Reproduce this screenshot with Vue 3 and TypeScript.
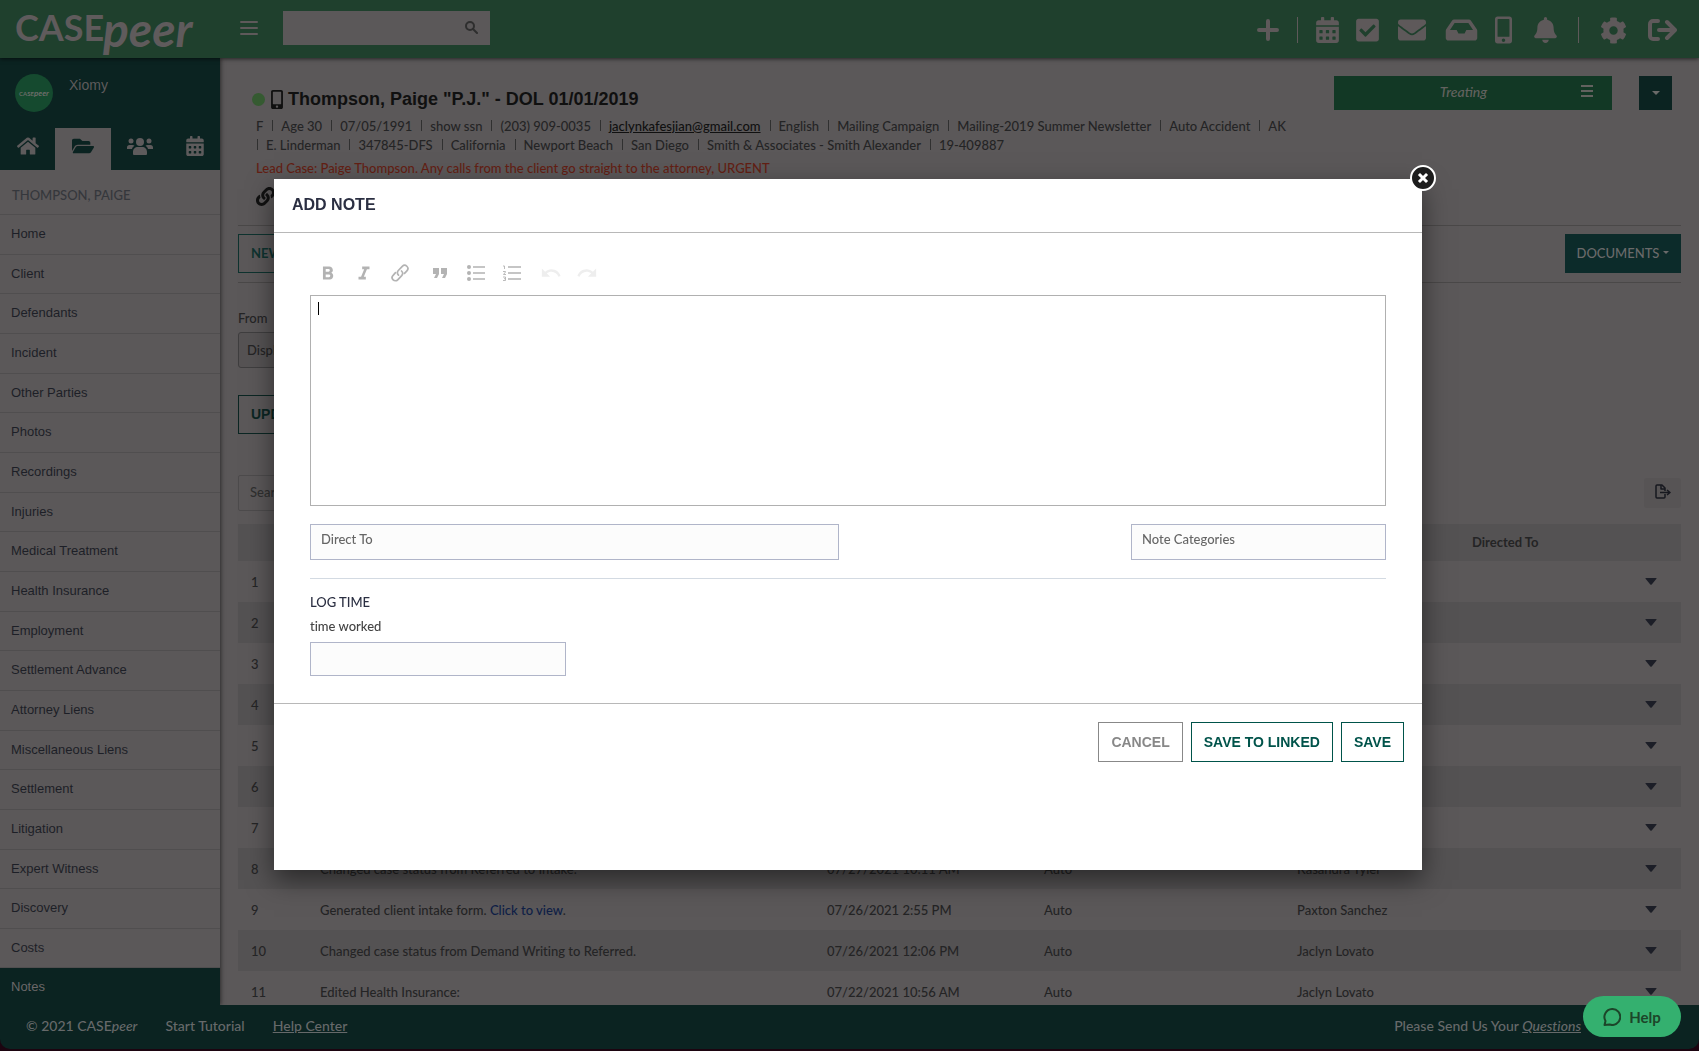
<script setup lang="ts">
import { ref } from 'vue'

interface Icon {
  box: string
  d: string
}

interface NavIcon extends Icon {
  label: string
  w: number
  h: number
  gap: number
}

interface NoteRow {
  id: number
  text?: string
  link?: string
  date?: string
  category?: string
  author?: string
}

const calendar: Icon = {
  box: '0 0 448 512',
  d: 'M0 464c0 26.500 21.500 48 48 48h352c26.500 0 48-21.500 48-48V192H0v272zm320-196c0-6.600 5.400-12 12-12h40c6.600 0 12 5.400 12 12v40c0 6.600-5.400 12-12 12h-40c-6.600 0-12-5.400-12-12v-40zm0 128c0-6.600 5.400-12 12-12h40c6.600 0 12 5.400 12 12v40c0 6.600-5.400 12-12 12h-40c-6.600 0-12-5.400-12-12v-40zM192 268c0-6.600 5.400-12 12-12h40c6.600 0 12 5.400 12 12v40c0 6.600-5.400 12-12 12h-40c-6.600 0-12-5.400-12-12v-40zm0 128c0-6.600 5.400-12 12-12h40c6.600 0 12 5.400 12 12v40c0 6.600-5.400 12-12 12h-40c-6.600 0-12-5.400-12-12v-40zM64 268c0-6.600 5.400-12 12-12h40c6.600 0 12 5.400 12 12v40c0 6.600-5.400 12-12 12H76c-6.600 0-12-5.400-12-12v-40zm0 128c0-6.600 5.400-12 12-12h40c6.600 0 12 5.400 12 12v40c0 6.600-5.400 12-12 12H76c-6.600 0-12-5.400-12-12v-40zM400 64h-48V16c0-8.800-7.200-16-16-16h-32c-8.800 0-16 7.200-16 16v48H160V16c0-8.800-7.200-16-16-16h-32c-8.800 0-16 7.200-16 16v48H48C21.500 64 0 85.500 0 112v48h448v-48c0-26.500-21.500-48-48-48z',
}

const mobile: Icon = {
  box: '0 0 320 512',
  d: 'M272 0H48C21.500 0 0 21.500 0 48v416c0 26.500 21.500 48 48 48h224c26.500 0 48-21.500 48-48V48c0-26.500-21.500-48-48-48zM160 480c-17.700 0-32-14.300-32-32s14.300-32 32-32 32 14.300 32 32-14.300 32-32 32zm112-108c0 6.600-5.400 12-12 12H60c-6.600 0-12-5.400-12-12V60c0-6.600 5.400-12 12-12h200c6.600 0 12 5.400 12 12v312z',
}

const headerIcons: NavIcon[] = [
  { label: 'Calendar', w: 23, h: 26, gap: 18, ...calendar },
  {
    label: 'Tasks', w: 23, h: 26, gap: 17, box: '0 0 448 512',
    d: 'M400 480H48c-26.510 0-48-21.490-48-48V80c0-26.510 21.490-48 48-48h352c26.510 0 48 21.490 48 48v352c0 26.510-21.490 48-48 48zm-204.686-98.059l184-184c6.248-6.248 6.248-16.379 0-22.627l-22.627-22.627c-6.248-6.248-16.379-6.249-22.628 0L184 302.745l-70.059-70.059c-6.248-6.248-16.379-6.248-22.628 0l-22.627 22.627c-6.248 6.248-6.248 16.379 0 22.627l104 104c6.249 6.250 16.379 6.250 22.628.001z',
  },
  {
    label: 'Messages', w: 28, h: 28, gap: 19, box: '0 0 512 512',
    d: 'M502.300 190.800c3.900-3.100 9.700-.2 9.700 4.700V400c0 26.500-21.500 48-48 48H48c-26.500 0-48-21.500-48-48V195.600c0-5 5.700-7.800 9.700-4.700 22.400 17.400 52.100 39.500 154.100 113.600 21.100 15.400 56.700 47.800 92.200 47.600 35.700.3 72-32.800 92.300-47.600 102-74.100 131.600-96.300 154-113.700zM256 320c23.200.4 56.600-29.200 73.400-41.400 132.700-96.300 142.800-104.700 173.400-128.700 5.800-4.500 9.200-11.500 9.200-18.900v-19c0-26.500-21.500-48-48-48H48c-26.500 0-48 21.500-48 48v19c0 7.400 3.400 14.300 9.200 18.900 30.600 23.900 40.700 32.400 173.400 128.700 16.800 12.200 50.200 41.800 73.400 41.400z',
  },
  {
    label: 'Inbox', w: 33, h: 28, gap: 19, box: '0 0 576 512',
    d: 'M567.938 243.908L462.250 85.374A48.003 48.003 0 0 0 422.311 64H153.689a48 48 0 0 0-39.938 21.374L8.062 243.908A47.994 47.994 0 0 0 0 270.533V400c0 26.510 21.490 48 48 48h480c26.510 0 48-21.490 48-48V270.533a47.994 47.994 0 0 0-8.062-26.625zM162.252 128h251.497l85.333 128H376l-32 64H232l-32-64H76.918l85.334-128z',
  },
  { label: 'Mobile', w: 17, h: 28, gap: 17, ...mobile },
  {
    label: 'Notifications', w: 23, h: 26, gap: 22, box: '0 0 448 512',
    d: 'M224 512c35.320 0 63.970-28.650 63.970-64H160.030c0 35.350 28.650 64 63.970 64zm215.390-149.710c-19.320-20.760-55.470-51.990-55.470-154.290 0-77.700-54.480-139.900-127.940-155.160V32c0-17.670-14.320-32-31.980-32s-31.980 14.330-31.980 32v20.840C118.560 68.100 64.080 130.300 64.080 208c0 102.300-36.150 133.530-55.470 154.290-6 6.450-8.660 14.160-8.610 21.710.11 16.400 12.980 32 32.100 32h383.800c19.120 0 32-15.600 32.100-32 .05-7.550-2.610-15.270-8.610-21.710z',
  },
]

const cog =
  'M487.400 315.700l-42.600-24.600c4.300-23.200 4.300-47 0-70.200l42.600-24.600c4.900-2.800 7.100-8.600 5.500-14-11.100-35.600-30-67.800-54.700-94.600-3.800-4.100-10-5.100-14.800-2.300L380.800 110c-17.900-15.400-38.500-27.300-60.800-35.100V25.800c0-5.600-3.900-10.500-9.400-11.700-36.700-8.200-74.300-7.800-109.200 0-5.500 1.200-9.400 6.100-9.400 11.700V75c-22.200 7.900-42.800 19.800-60.800 35.100L88.700 85.500c-4.900-2.800-11-1.900-14.800 2.300-24.700 26.700-43.600 58.900-54.700 94.600-1.700 5.400.6 11.200 5.500 14L67.300 221c-4.300 23.200-4.300 47 0 70.200l-42.600 24.600c-4.900 2.800-7.100 8.600-5.500 14 11.100 35.600 30 67.800 54.700 94.600 3.800 4.100 10 5.100 14.800 2.300l42.600-24.600c17.900 15.400 38.500 27.300 60.800 35.100v49.200c0 5.600 3.900 10.500 9.400 11.700 36.700 8.200 74.300 7.800 109.200 0 5.500-1.200 9.400-6.100 9.400-11.700v-49.200c22.200-7.900 42.800-19.800 60.800-35.100l42.600 24.600c4.900 2.800 11 1.900 14.800-2.300 24.700-26.700 43.600-58.900 54.700-94.600 1.500-5.500-.7-11.300-5.600-14.100zM256 336c-44.100 0-80-35.900-80-80s35.900-80 80-80 80 35.900 80 80-35.900 80-80 80z'
const home =
  'M280.370 148.260L96 300.110V464a16 16 0 0 0 16 16l112.060-.29a16 16 0 0 0 15.920-16V368a16 16 0 0 1 16-16h64a16 16 0 0 1 16 16v95.640a16 16 0 0 0 16 16.050L464 480a16 16 0 0 0 16-16V300L295.670 148.260a12.190 12.190 0 0 0-15.300 0zM571.600 251.470L488 182.560V44.050a12 12 0 0 0-12-12h-56a12 12 0 0 0-12 12v72.610L318.470 43a48 48 0 0 0-61 0L4.340 251.470a12 12 0 0 0-1.600 16.900l25.500 31A12 12 0 0 0 45.150 301l235.220-193.740a12.190 12.190 0 0 1 15.300 0L530.900 301a12 12 0 0 0 16.900-1.600l25.500-31a12 12 0 0 0-1.700-16.930z'
const folder =
  'M572.694 292.093L500.270 416.248A63.997 63.997 0 0 1 444.989 448H45.025c-18.523 0-30.064-20.093-20.731-36.093l72.424-124.155A64 64 0 0 1 152 256h399.964c18.523 0 30.064 20.093 20.730 36.093zM152 224h328v-48c0-26.510-21.490-48-48-48H272l-64-64H48C21.490 64 0 85.490 0 112v278.046l69.077-118.418C86.214 242.250 117.989 224 152 224z'
const chain =
  'M326.612 185.391c59.747 59.809 58.927 155.698.36 214.590-.11.12-.24.25-.36.37l-67.200 67.200c-59.270 59.270-155.699 59.262-214.960 0-59.270-59.260-59.270-155.700 0-214.960l37.106-37.106c9.840-9.840 26.786-3.300 27.294 10.606.648 17.722 3.826 35.527 9.690 52.721 1.986 5.822.567 12.262-3.783 16.612l-13.087 13.087c-28.026 28.026-28.905 73.660-1.155 101.960 28.024 28.579 74.086 28.749 102.325.51l67.200-67.190c28.191-28.191 28.073-73.757 0-101.830-3.701-3.694-7.429-6.564-10.341-8.569a16.037 16.037 0 0 1-6.947-12.606c-.396-10.567 3.348-21.456 11.698-29.806l21.054-21.055c5.521-5.521 14.182-6.199 20.584-1.731a152.482 152.482 0 0 1 20.522 17.197zM467.547 44.449c-59.261-59.262-155.690-59.270-214.960 0l-67.200 67.200c-.12.12-.25.25-.36.37-58.566 58.892-59.387 154.781.36 214.590a152.454 152.454 0 0 0 20.521 17.196c6.402 4.468 15.064 3.789 20.584-1.731l21.054-21.055c8.350-8.350 12.094-19.239 11.698-29.806a16.037 16.037 0 0 0-6.947-12.606c-2.912-2.005-6.640-4.875-10.341-8.569-28.073-28.073-28.191-73.639 0-101.830l67.200-67.190c28.239-28.239 74.300-28.069 102.325.51 27.750 28.300 26.872 73.934-1.155 101.960l-13.087 13.087c-4.350 4.350-5.769 10.790-3.783 16.612 5.864 17.194 9.042 34.999 9.690 52.721.509 13.906 17.454 20.446 27.294 10.606l37.106-37.106c59.271-59.259 59.271-155.699.001-214.959z'

const sections: string[] = [
  'Home', 'Client', 'Defendants', 'Incident', 'Other Parties', 'Photos', 'Recordings',
  'Injuries', 'Medical Treatment', 'Health Insurance', 'Employment', 'Settlement Advance',
  'Attorney Liens', 'Miscellaneous Liens', 'Settlement', 'Litigation', 'Expert Witness',
  'Discovery', 'Costs', 'Notes',
]
const activeSection = ref('Notes')

const detailsTop: string[] = [
  'F', 'Age 30', '07/05/1991', 'show ssn', '(203) 909-0035', 'jaclynkafesjian@gmail.com',
  'English', 'Mailing Campaign', 'Mailing-2019 Summer Newsletter', 'Auto Accident', 'AK',
]
const detailsBottom: string[] = [
  'E. Linderman', '347845-DFS', 'California', 'Newport Beach', 'San Diego',
  'Smith & Associates - Smith Alexander', '19-409887',
]

const rows: NoteRow[] = [
  { id: 1 }, { id: 2 }, { id: 3 }, { id: 4 }, { id: 5 }, { id: 6 }, { id: 7 },
  { id: 8, text: 'Changed case status from Referred to Intake.', date: '07/27/2021 10:11 AM', category: 'Auto', author: 'Kasandra Tyler' },
  { id: 9, text: 'Generated client intake form.', link: 'Click to view', date: '07/26/2021 2:55 PM', category: 'Auto', author: 'Paxton Sanchez' },
  { id: 10, text: 'Changed case status from Demand Writing to Referred.', date: '07/26/2021 12:06 PM', category: 'Auto', author: 'Jaclyn Lovato' },
  { id: 11, text: 'Edited Health Insurance:', date: '07/22/2021 10:56 AM', category: 'Auto', author: 'Jaclyn Lovato' },
]

const note = ref('')
const directTo = ref('')
const categories = ref('')
const timeWorked = ref('')
const query = ref('')
const filter = ref('')
</script>

<template>
  <div class="app">
    <header class="topbar">
      <svg class="logo" width="204" height="68" role="img" aria-label="CASEpeer">
        <text x="15" y="41" class="logo-case">CASE</text>
        <text x="103" y="47" class="logo-peer">peer</text>
      </svg>
      <button class="icon-btn burger" aria-label="Toggle menu">
        <svg width="18" height="16" viewBox="0 0 18 16"><path d="M1 2h16M1 8h16M1 14h16" stroke="currentColor" stroke-width="2" stroke-linecap="round" /></svg>
      </button>
      <form class="search" @submit.prevent>
        <input v-model="query" type="text" aria-label="Search cases" />
        <svg width="13" height="13" viewBox="0 0 13 13" fill="none" stroke="currentColor" stroke-width="2" stroke-linecap="round"><circle cx="5" cy="5" r="4" /><path d="M8 8l4 4" /></svg>
      </form>
      <nav class="tools" aria-label="Tools">
        <button class="icon-btn" aria-label="Add">
          <svg width="22" height="22" viewBox="0 0 22 22"><path d="M11 2v18M2 11h18" stroke="currentColor" stroke-width="4" stroke-linecap="round" /></svg>
        </button>
        <span class="divider first"></span>
        <button v-for="icon in headerIcons" :key="icon.label" class="icon-btn" :aria-label="icon.label" :style="{ marginLeft: icon.gap + 'px' }">
          <svg :width="icon.w" :height="icon.h" :viewBox="icon.box" fill="currentColor"><path :d="icon.d" /></svg>
        </button>
        <span class="divider second"></span>
        <button class="icon-btn" aria-label="Settings">
          <svg width="27" height="27" viewBox="0 0 512 512" fill="currentColor"><path :d="cog" /></svg>
        </button>
        <button class="icon-btn exit" aria-label="Sign out">
          <svg width="29" height="22" viewBox="0 0 29 22" fill="none" stroke="currentColor" stroke-linecap="round" stroke-linejoin="round"><path d="M10 2H5a3 3 0 0 0-3 3v12a3 3 0 0 0 3 3h5" stroke-width="4" /><path d="M11 11h15" stroke-width="4" /><path d="M19 3l8 8-8 8" stroke-width="4" /></svg>
        </button>
      </nav>
    </header>

    <div class="body">
      <aside class="sidebar">
        <div class="profile">
          <div class="user">
            <svg class="avatar" width="38" height="38" viewBox="0 0 38 38" role="img" aria-label="CASEpeer">
              <circle cx="19" cy="19" r="19" fill="#154a2f" />
              <text x="4" y="22" class="mini-case">CASE</text>
              <text x="19" y="22" class="mini-peer">peer</text>
            </svg>
            <span class="user-name">Xiomy</span>
          </div>
          <div class="tabs">
            <button class="tab" aria-label="Dashboard"><svg width="22" height="20" viewBox="0 0 576 512" fill="currentColor"><path :d="home" /></svg></button>
            <button class="tab active" aria-label="Cases"><svg width="22" height="20" viewBox="0 0 576 512" fill="currentColor"><path :d="folder" /></svg></button>
            <button class="tab" aria-label="Contacts">
              <svg width="26" height="18" viewBox="0 0 26 18" fill="currentColor">
                <circle cx="13" cy="5" r="4" /><circle cx="4" cy="4" r="2.500" /><circle cx="22" cy="4" r="2.500" />
                <path d="M6 17v-2c0-3 2-5 5-5h4c3 0 5 2 5 5v2c0 .5-.5 1-1 1H7c-.5 0-1-.5-1-1zM0 12v-1.500C0 9 1 8 2.500 8h3c.8 0 1.500.2 2 .7C6 9.500 5.300 10.600 5 12zM26 12v-1.500C26 9 25 8 23.500 8h-3c-.8 0-1.500.2-2 .7 1.500.8 2.200 1.900 2.500 3.300z" />
              </svg>
            </button>
            <button class="tab" aria-label="Calendar"><svg width="18" height="20" :viewBox="calendar.box" fill="currentColor"><path :d="calendar.d" /></svg></button>
          </div>
        </div>
        <h2 class="case-name">THOMPSON, PAIGE</h2>
        <nav class="sections" aria-label="Case sections">
          <a v-for="s in sections" :key="s" href="#" :class="{ current: s === activeSection }" @click.prevent="activeSection = s">{{ s }}</a>
        </nav>
      </aside>

      <main class="content">
        <section class="case-head">
          <div class="case-info">
            <h1>
              <span class="status-dot"></span>
              <svg width="12" height="19" :viewBox="mobile.box" fill="currentColor"><path :d="mobile.d" /></svg>
              <span>Thompson, Paige "P.J." - DOL 01/01/2019</span>
            </h1>
            <div class="details">
              <template v-for="(d, i) in detailsTop" :key="d">
                <i v-if="i > 0" class="sep"></i>
                <a v-if="d.includes('@')" :href="'mailto:' + d">{{ d }}</a>
                <span v-else>{{ d }}</span>
              </template>
            </div>
            <div class="details lower">
              <template v-for="d in detailsBottom" :key="d">
                <i class="sep"></i><span>{{ d }}</span>
              </template>
            </div>
            <p class="alert">Lead Case: Paige Thompson. Any calls from the client go straight to the attorney, URGENT</p>
            <button class="icon-btn chain" aria-label="Linked cases"><svg width="19" height="19" viewBox="0 0 512 512" fill="currentColor"><path :d="chain" /></svg></button>
          </div>
          <div class="case-status">
            <button class="status"><em>Treating</em>
              <svg width="14" height="12" viewBox="0 0 14 12"><path d="M1 1h12M1 6h12M1 11h12" stroke="currentColor" stroke-width="2" /></svg>
            </button>
            <button class="status-more" aria-label="More"><svg width="8" height="4" viewBox="0 0 8 4" fill="currentColor"><path d="M0 0h8L4 4z" /></svg></button>
          </div>
        </section>

        <section class="actions">
          <button class="outline new-note">NEW NOTE</button>
          <button class="documents">DOCUMENTS <svg width="6" height="3" viewBox="0 0 6 3" fill="currentColor"><path d="M0 0h6L3 3z" /></svg></button>
        </section>

        <section class="filters">
          <label for="from">From</label>
          <select id="from"><option>Display All</option></select>
          <button class="outline update">UPDATE</button>
        </section>

        <section class="table-tools">
          <input v-model="filter" type="text" placeholder="Search" aria-label="Search notes" />
          <button class="export" aria-label="Export">
            <svg width="16" height="15" viewBox="0 0 16 15" fill="none" stroke="currentColor" stroke-width="1.500" stroke-linejoin="round"><path d="M10 10v3a1 1 0 0 1-1 1H2a1 1 0 0 1-1-1V2a1 1 0 0 1 1-1h5l3 3v3" /><path d="M6 1v4h4M5 8.500h9M12 6l3 2.500-3 2.500" /></svg>
          </button>
        </section>

        <table class="notes">
          <colgroup>
            <col class="c-id" /><col /><col class="c-date" /><col class="c-cat" /><col class="c-author" /><col class="c-dir" /><col class="c-menu" />
          </colgroup>
          <thead>
            <tr><th></th><th></th><th></th><th></th><th></th><th scope="col">Directed To</th><th></th></tr>
          </thead>
          <tbody>
            <tr v-for="r in rows" :key="r.id">
              <td>{{ r.id }}</td>
              <td>{{ r.text }} <template v-if="r.link"><a href="#">{{ r.link }}</a>.</template></td>
              <td>{{ r.date }}</td>
              <td>{{ r.category }}</td>
              <td>{{ r.author }}</td>
              <td></td>
              <td><button class="icon-btn row-menu" aria-label="Row menu"><svg width="12" height="7" viewBox="0 0 12 7" fill="currentColor"><path d="M1 0h10q1 0 .4.8L6.700 6.500q-.7.7-1.400 0L.6.800Q0 0 1 0z" /></svg></button></td>
            </tr>
          </tbody>
        </table>
      </main>
    </div>

    <footer class="footer">
      <span>© 2021 CASE<em>peer</em></span>
      <a href="#" class="plain">Start Tutorial</a>
      <a href="#">Help Center</a>
      <span class="feedback">Please Send Us Your <a href="#"><em>Questions</em></a></span>
    </footer>

    <div class="overlay">
      <form class="modal" role="dialog" aria-labelledby="modal-title" @submit.prevent>
        <button type="button" class="close" aria-label="Close">
          <svg width="30" height="30" viewBox="0 0 30 30"><circle cx="15" cy="15" r="12" fill="#1c1c1c" stroke="#fff" stroke-width="2" /><path d="M12 12l6 6M18 12l-6 6" stroke="#fff" stroke-width="3" stroke-linecap="square" /></svg>
        </button>
        <h2 id="modal-title">ADD NOTE</h2>
        <div class="fields">
          <div class="editor-tools" role="toolbar" aria-label="Formatting">
            <button type="button" aria-label="Bold"><svg width="22" height="22" viewBox="0 0 24 24" fill="currentColor"><path d="M15.600 11.800c1-.7 1.700-1.800 1.700-2.800 0-2.300-1.800-4-4-4H6.500v14H14c2.100 0 3.700-1.700 3.700-3.800 0-1.500-.8-2.800-2.100-3.400zM9.500 7.500h3a1.500 1.500 0 0 1 0 3h-3zm3.500 9H9.500v-3H13a1.500 1.500 0 0 1 0 3z" /></svg></button>
            <button type="button" aria-label="Italic"><svg width="22" height="22" viewBox="0 0 24 24" fill="currentColor"><path d="M10 5v3h2.200l-3.400 8H6v3h8v-3h-2.200l3.400-8H18V5z" /></svg></button>
            <button type="button" aria-label="Link"><svg width="20" height="20" viewBox="0 0 20 20" fill="none" stroke="currentColor" stroke-width="1.700" stroke-linecap="round"><path d="M8.500 12.200a3.300 3.300 0 0 1-.2-4.700l4-4.200a3.200 3.200 0 0 1 4.600 4.500l-2.400 2.600" /><path d="M11.500 8a3.300 3.300 0 0 1 .2 4.600l-4 4.200a3.200 3.200 0 0 1-4.600-4.500l2.400-2.600" /></svg></button>
            <button type="button" class="quote" aria-label="Quote"><svg width="24" height="24" viewBox="0 0 24 24" fill="currentColor"><path d="M6 17h3l2-4V7H5v6h3zm8 0h3l2-4V7h-6v6h3z" /></svg></button>
            <button type="button" aria-label="Bulleted list"><svg width="18" height="16" viewBox="0 0 18 16"><g fill="currentColor"><circle cx="2" cy="2" r="2" /><circle cx="2" cy="8" r="2" /><circle cx="2" cy="14" r="2" /></g><path d="M6 2h12M6 8h12M6 14h12" stroke="currentColor" stroke-width="1.600" /></svg></button>
            <button type="button" aria-label="Numbered list"><svg width="18" height="16" viewBox="0 0 18 16" fill="none" stroke="currentColor"><path d="M0 1h1.500v3M0 6.500h2.500v.5L.5 9.500h2.500M0 12h2.500v3.500H0M1 13.700h1.500" stroke-width=".9" /><path d="M5 2h13M5 8h13M5 14h13" stroke-width="1.600" /></svg></button>
            <button type="button" class="faded undo" aria-label="Undo"><svg width="22" height="22" viewBox="0 0 24 24" fill="currentColor"><path d="M12.500 8c-2.650 0-5.050 1-6.900 2.600L2 7v9h9l-3.620-3.620c1.390-1.160 3.160-1.880 5.120-1.880 3.540 0 6.550 2.310 7.600 5.500l2.370-.78C21.080 11.030 17.150 8 12.500 8z" /></svg></button>
            <button type="button" class="faded" aria-label="Redo"><svg width="22" height="22" viewBox="0 0 24 24" fill="currentColor"><path d="M18.400 10.600C16.550 9 14.150 8 11.500 8c-4.650 0-8.580 3.030-9.960 7.220L3.900 16c1.050-3.190 4.050-5.500 7.600-5.500 1.950 0 3.730.72 5.120 1.880L13 16h9V7z" /></svg></button>
          </div>
          <div class="editor">
            <textarea v-model="note" aria-label="Note"></textarea>
            <span class="text-cursor"></span>
          </div>
          <div class="routing">
            <input v-model="directTo" type="text" class="direct" placeholder="Direct To" aria-label="Direct To" />
            <input v-model="categories" type="text" class="category" placeholder="Note Categories" aria-label="Note Categories" />
          </div>
          <fieldset class="log">
            <legend>LOG TIME</legend>
            <label for="time">time worked</label>
            <input id="time" v-model="timeWorked" type="text" />
          </fieldset>
        </div>
        <div class="modal-actions">
          <button type="button" class="cancel">CANCEL</button>
          <button type="submit">SAVE TO LINKED</button>
          <button type="submit">SAVE</button>
        </div>
      </form>
    </div>

    <button class="help">
      <svg width="18" height="18" viewBox="0 0 18 18" fill="none" stroke="currentColor" stroke-width="2" stroke-linejoin="round"><path d="M9 1a8 8 0 1 1-2.500 15.500L1.500 17l1-4A8 8 0 0 1 9 1z" /></svg>
      Help
    </button>
  </div>
</template>

<style>
body {
  margin: 0;
  background: #1c0410;
}
</style>

<style scoped>
.app {
  --sans: 'Lato', sans-serif;
  --helv: 'Liberation Sans', Arial, sans-serif;
  --ink: #242425;
  --page: #5b5859;
  --teal: #0b2321;
  --line: #4a4848;
  box-sizing: border-box;
  display: flex;
  flex-direction: column;
  height: 100vh;
  padding-bottom: 2px;
  overflow: hidden;
  font-family: var(--sans);
  font-size: 13px;
  font-weight: 500;
  font-variant-ligatures: none;
  color: var(--ink);
}
.app * {
  box-sizing: border-box;
}
button,
input,
select,
textarea {
  font-family: inherit;
  font-size: inherit;
  font-weight: inherit;
  color: inherit;
  margin: 0;
  outline: none;
}
button {
  padding: 0;
  background: none;
  border: 0;
}
svg {
  display: block;
  flex: none;
}
.icon-btn {
  display: flex;
}

/* top bar */
.topbar {
  position: relative;
  z-index: 2;
  flex: none;
  display: flex;
  align-items: flex-start;
  height: 58px;
  background: #1f402d;
  color: #5e595a;
  box-shadow: 0 1px 4px rgba(0, 0, 0, 0.6);
}
.logo {
  fill: #5f5b5c;
  margin-right: 36px;
}
.logo-case {
  font: 700 36px var(--sans);
}
.logo-peer {
  font: italic 700 48px var(--sans);
}
.burger {
  margin-top: 20px;
}
.search {
  display: flex;
  align-items: center;
  width: 207px;
  height: 34px;
  margin: 11px 0 0 25px;
  padding: 0 12px 1px 0;
  background: var(--page);
  color: #2e2e2e;
}
.search input {
  flex: 1;
  min-width: 0;
  border: 0;
  background: none;
}
.tools {
  display: flex;
  align-items: center;
  height: 58px;
  margin: 1px 22px 0 auto;
}
.divider {
  width: 1px;
  height: 26px;
  background: #5e595a;
}
.first {
  margin-left: 18px;
}
.second {
  margin: 0 21px;
}
.exit {
  margin-left: 21px;
}

/* layout */
.body {
  flex: 1;
  display: flex;
  min-height: 0;
  overflow: hidden;
  background: var(--page);
}
.sidebar {
  flex: none;
  width: 220px;
  box-shadow: 1px 0 4px rgba(0, 0, 0, 0.5);
  font-family: var(--helv);
}
.profile {
  height: 112px;
  padding-top: 16px;
  background: var(--teal);
  color: #5e5b5c;
}
.user {
  display: flex;
  height: 54px;
  padding-left: 15px;
}
.user-name {
  margin: 3px 0 0 16px;
  font-size: 14px;
  line-height: 16px;
}
.mini-case {
  font: 700 6px var(--sans);
  fill: #6a6c68;
}
.mini-peer {
  font: italic 700 8px var(--sans);
  fill: #6a6c68;
}
.tabs {
  display: grid;
  grid-template-columns: 55px 56px 58px 51px;
  height: 42px;
}
.tab {
  display: flex;
  align-items: center;
  justify-content: center;
  padding-bottom: 6px;
}
.tab.active {
  background: var(--page);
  color: var(--teal);
}
.case-name {
  height: 45px;
  margin: 0;
  padding-left: 12px;
  border-bottom: 1px solid #504e4f;
  font: 500 13px/50px var(--sans);
  color: #35373c;
}
.sections {
  display: flex;
  flex-direction: column;
  height: 793px;
}
.sections a {
  flex: 1 1 0;
  min-height: 0;
  padding-left: 11px;
  border-bottom: 1px solid #504e4f;
  line-height: 38px;
  color: #1d1f27;
  text-decoration: none;
}
.sections a.current {
  background: var(--teal);
  color: #6a6768;
  border-color: var(--teal);
}

/* case header */
.content {
  flex: 1;
  min-width: 0;
  padding: 18px 18px 0;
}
.case-head {
  display: flex;
  justify-content: space-between;
  border-bottom: 1px solid var(--line);
}
.case-info {
  padding: 10px 0 19px 18px;
}
h1 {
  display: flex;
  align-items: center;
  height: 27px;
  margin: 0 0 3px -4px;
  font: 700 18px/27px var(--helv);
  color: #101010;
}
.status-dot {
  width: 13px;
  height: 13px;
  margin-right: 6px;
  border-radius: 50%;
  background: #355a31;
}
h1 svg {
  margin-right: 5px;
}
.details {
  display: flex;
  align-items: center;
  height: 19px;
  white-space: nowrap;
}
.details a {
  color: #101010;
}
.sep {
  width: 1px;
  height: 11px;
  margin: 0 8px 0 9px;
  background: #303030;
}
.lower .sep:first-child {
  margin-left: 1px;
}
.alert {
  margin: 4px 0 9px;
  line-height: 20px;
  color: #631f14;
}
.chain {
  color: #111;
}
.case-status {
  display: flex;
  align-items: flex-start;
  padding-right: 9px;
}
.status {
  display: flex;
  align-items: center;
  width: 278px;
  height: 34px;
  margin-right: 27px;
  padding: 0 18px 4px 13px;
  background: #123825;
  color: #62625f;
  font-size: 14px;
}
.status em {
  flex: 1;
}
.status-more {
  display: flex;
  align-items: center;
  justify-content: center;
  width: 33px;
  height: 34px;
  background: var(--teal);
  color: #6a6a69;
}
.actions {
  display: flex;
  justify-content: space-between;
  padding: 8px 0 9px;
  border-bottom: 1px solid var(--line);
}
.outline {
  display: block;
  height: 39px;
  padding: 0 12px 2px;
  border: 1px solid #0e332f;
  color: #0e332f;
  font-weight: 700;
}
.documents {
  display: flex;
  align-items: center;
  justify-content: center;
  gap: 4px;
  width: 116px;
  height: 39px;
  padding-bottom: 2px;
  background: #0c2b2a;
  color: #6a6a6a;
}
.filters {
  padding-top: 25px;
}
.filters label {
  display: block;
  margin-bottom: 4px;
  line-height: 20px;
}
.filters select {
  display: block;
  width: 240px;
  height: 36px;
  padding: 0 8px;
  border: 1px solid #3f3e3f;
  border-radius: 3px;
  background: #565354;
  appearance: none;
}
.filters .update {
  margin-top: 27px;
  color: #0b2623;
  font: 700 14px var(--helv);
  border-color: #0b2623;
}
.table-tools {
  display: flex;
  align-items: center;
  justify-content: space-between;
  margin: 41px 0 13px;
}
.table-tools input {
  width: 300px;
  height: 36px;
  padding: 0 11px 3px;
  border: 1px solid #4d4b4c;
  border-radius: 2px;
  background: none;
}
.table-tools input::placeholder {
  color: #303030;
}
.export {
  display: flex;
  align-items: center;
  justify-content: center;
  width: 37px;
  height: 30px;
  padding-bottom: 4px;
  border-radius: 3px;
  background: #575455;
  color: #17181f;
}
.notes {
  width: 100%;
  table-layout: fixed;
  border-collapse: collapse;
}
.c-id { width: 69px; }
.c-date { width: 217px; }
.c-cat { width: 253px; }
.c-author { width: 175px; }
.c-dir { width: 173px; }
.c-menu { width: 49px; }
.notes th,
.notes td {
  height: 41px;
  padding: 0 0 0 13px;
  text-align: left;
  white-space: nowrap;
}
.notes th {
  height: 37px;
  padding-bottom: 2px;
}
.notes thead tr,
.notes tbody tr:nth-child(even) {
  background: #545253;
}
.notes a {
  color: #0f1f47;
  text-decoration: none;
}
.row-menu {
  color: #1c1e27;
}

/* footer */
.footer {
  position: relative;
  z-index: 1;
  flex: none;
  display: flex;
  align-items: center;
  gap: 28px;
  height: 44px;
  padding: 0 118px 4px 26px;
  border-radius: 0 0 10px 10px;
  background: var(--teal);
  color: #66696a;
  font-size: 14px;
}
.footer a {
  color: inherit;
}
.footer .plain {
  text-decoration: none;
}
.feedback {
  margin-left: auto;
}
.help {
  position: fixed;
  right: 18px;
  bottom: 14px;
  z-index: 5;
  display: flex;
  align-items: center;
  justify-content: center;
  gap: 8px;
  width: 98px;
  height: 41px;
  border-radius: 21px;
  background: #34b06f;
  color: #1c4529;
  font-size: 15px;
  font-weight: 700;
}

/* dialog */
.overlay {
  position: fixed;
  inset: 0;
  z-index: 4;
  padding: 179px 277px 0 274px;
}
.modal {
  position: relative;
  min-height: 691px;
  background: #fff;
  box-shadow: 0 10px 25px rgba(0, 0, 0, 0.5);
}
.close {
  position: absolute;
  top: -16px;
  right: -16px;
}
.modal h2 {
  height: 54px;
  margin: 0;
  padding-left: 18px;
  border-bottom: 1px solid #b8b8b8;
  font: 700 16px/51px var(--helv);
  color: #2b2f42;
}
.fields {
  padding: 28px 36px 27px;
  border-bottom: 1px solid #b8b8b8;
}
.editor-tools {
  display: flex;
  height: 24px;
  margin-bottom: 10px;
  padding-left: 6px;
  color: #b3b3b3;
}
.editor-tools button {
  display: flex;
  align-items: center;
  justify-content: center;
  width: 24px;
  height: 24px;
  margin-right: 12px;
}
.editor-tools .quote {
  margin-left: 4px;
}
.editor-tools .undo {
  margin-left: 3px;
}
.editor-tools .faded {
  color: #eee;
}
.editor {
  position: relative;
}
.editor textarea {
  display: block;
  width: 100%;
  height: 211px;
  padding: 6px 8px;
  border: 1px solid #b0b0b0;
  background: #fff;
  resize: none;
}
.text-cursor {
  position: absolute;
  top: 7px;
  left: 8px;
  width: 1px;
  height: 13px;
  background: #000;
}
.routing {
  display: flex;
  justify-content: space-between;
  padding: 18px 0;
  border-bottom: 1px solid #d3dae2;
}
.fields input {
  padding: 0 10px 7px;
  border: 1px solid #b0b5c9;
  background: #fcfcfc;
}
.fields input::placeholder {
  color: #666;
  opacity: 1;
}
.routing input {
  height: 36px;
}
.direct {
  width: 529px;
}
.category {
  width: 255px;
}
.log {
  margin: 0;
  padding: 13px 0 0;
  border: 0;
}
.log legend {
  float: left;
  width: 100%;
  padding: 0;
  line-height: 20px;
  color: #2b2f42;
}
.log label {
  display: block;
  clear: both;
  padding: 4px 0 6px;
  line-height: 20px;
  color: #444;
}
.log input {
  display: block;
  width: 256px;
  height: 34px;
}
.modal-actions {
  display: flex;
  justify-content: flex-end;
  gap: 8px;
  padding: 18px 18px 0;
}
.modal-actions button {
  height: 40px;
  padding: 0 12px;
  border: 1px solid #00534a;
  background: #fff;
  color: #00534a;
  font: 700 14px var(--helv);
}
.modal-actions .cancel {
  border-color: #888;
  color: #888;
}
</style>
